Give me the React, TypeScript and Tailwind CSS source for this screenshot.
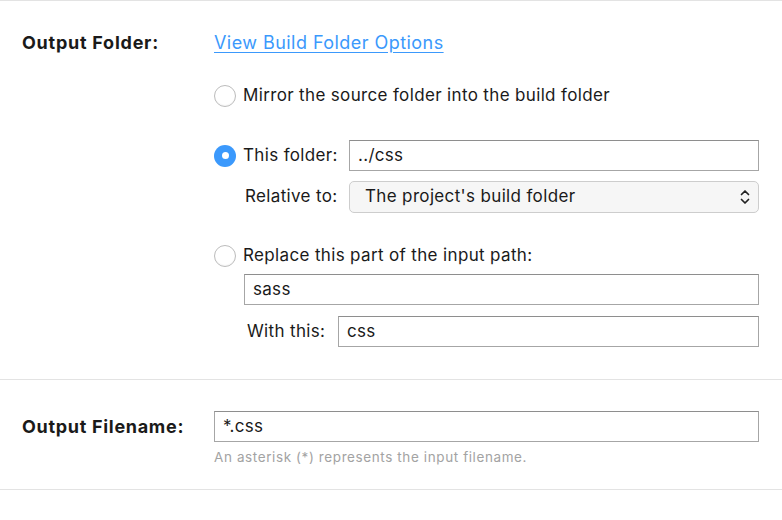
import React from 'react';

function Radio({ checked = false }: { checked?: boolean }) {
  return checked ? (
    <span className="flex h-[22px] w-[22px] shrink-0 items-center justify-center rounded-full bg-[#3b99fc]">
      <span className="h-[7px] w-[7px] rounded-full bg-white" />
    </span>
  ) : (
    <span className="h-[22px] w-[22px] shrink-0 rounded-full border border-[#bcbcbc] bg-white shadow-[inset_0_-1px_1px_rgba(0,0,0,0.04)]" />
  );
}

function TextBox({ value, className = '' }: { value: string; className?: string }) {
  return (
    <div
      className={`flex items-center border border-[#a6a6a6] border-t-[#8e8e8e] bg-white pl-[8px] text-[17px] tracking-[0.3px] text-[#1a1a1a] ${className}`}
    >
      {value}
    </div>
  );
}

export default function App() {
  return (
    <div
      className="min-h-[520px] bg-white text-[17px] tracking-[0.35px] text-[#1a1a1a]"
      style={{ fontFamily: 'Inter, "Noto Sans", sans-serif' }}
    >
      {/* Output folder */}
      <div className="grid grid-cols-[192px_1fr] border-t border-[#e3e3e3] pl-[22px] pr-[23px] pb-[32px] pt-[30px]">
        <div className="h-[24px] text-[18px] font-bold leading-[24px] tracking-[0.75px]">Output Folder:</div>
        <div className="flex flex-col">
          <a className="h-[24px] text-[18px] leading-[24px] tracking-[0.45px] text-[#3b99fc] underline underline-offset-[3px]">
            View Build Folder Options
          </a>

          <label className="mt-[29px] flex h-[24px] items-center gap-[7px]">
            <Radio />
            Mirror the source folder into the build folder
          </label>

          <div className="mt-[32px] flex h-[31px] items-center">
            <Radio checked />
            <span className="ml-[7px] w-[95px]">This folder:</span>
            <TextBox value="../css" className="ml-[11px] h-[31px] flex-1" />
          </div>
          <div className="mt-[10px] flex h-[32px] items-center">
            <span className="ml-[31px] w-[104px]">Relative to:</span>
            <div className="flex h-[32px] flex-1 items-center justify-between rounded-[5px] border border-[#cdcdcd] bg-[#f6f6f6] pl-[15px] pr-[6px]">
              <span>The project's build folder</span>
              <svg width="14" height="18" viewBox="0 0 14 18" fill="none" stroke="#222" strokeWidth="1.7" strokeLinecap="round" strokeLinejoin="round">
                <path d="M3.5 6.5 7 3l3.5 3.5" />
                <path d="M3.5 11.5 7 15l3.5-3.5" />
              </svg>
            </div>
          </div>

          <label className="mt-[31px] flex h-[24px] items-center gap-[7px]">
            <Radio />
            Replace this part of the input path:
          </label>
          <TextBox value="sass" className="ml-[30px] mt-[6px] h-[31px]" />
          <div className="mt-[11px] flex h-[31px] items-center">
            <span className="ml-[33px] w-[91px]">With this:</span>
            <TextBox value="css" className="h-[31px] flex-1" />
          </div>
        </div>
      </div>

      {/* Output filename */}
      <div className="grid grid-cols-[192px_1fr] border-y border-[#e3e3e3] pl-[22px] pr-[23px] pb-[23px] pt-[31px]">
        <div className="flex h-[31px] items-center text-[18px] font-bold tracking-[0.7px]">Output Filename:</div>
        <div className="flex flex-col">
          <TextBox value="*.css" className="h-[31px]" />
          <div className="mt-[7px] h-[17px] text-[13.5px] leading-[17px] tracking-[0.6px] text-[#a3a3a3]">
            An asterisk (*) represents the input filename.
          </div>
        </div>
      </div>
    </div>
  );
}
